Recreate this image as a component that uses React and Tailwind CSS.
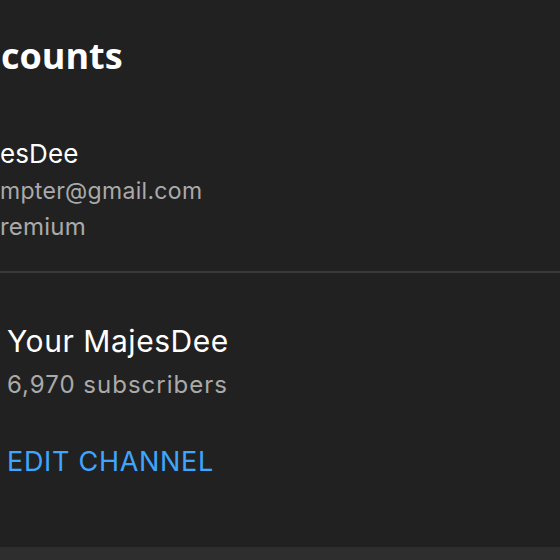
export default function App() {
  const inter = { fontFamily: 'Inter, "Noto Sans", sans-serif' };
  return (
    <div className="w-[560px] h-[560px] bg-[#212121] flex flex-col overflow-hidden" style={inter}>
      <div className="mt-[38px] h-[36px] leading-none text-[36px] font-bold text-white pl-[1px]" style={{ fontFamily: '"Open Sans", sans-serif' }}>
        counts
      </div>
      <div className="mt-[67px] h-[26px] leading-none text-[26px] text-white tracking-[0.1px]">esDee</div>
      <div className="mt-[13px] h-[24px] leading-none text-[23px] text-[#aaaaaa] tracking-[0.3px]">mpter@gmail.com</div>
      <div className="mt-[11px] h-[24px] leading-none text-[24px] text-[#aaaaaa] tracking-[0.2px]">remium</div>
      <div className="mt-[32px] h-[2px] bg-[#3a3a3a]" />
      <div className="pl-[7px] flex flex-col">
        <div className="mt-[53px] h-[30px] leading-none text-[30px] text-white tracking-[0.55px]">Your MajesDee</div>
        <div className="mt-[17px] h-[24px] leading-none text-[24px] text-[#aaaaaa] tracking-[1px]">6,970 subscribers</div>
        <div className="mt-[51px] h-[27px] leading-none text-[27px] text-[#3ea6ff] tracking-[0.7px]">EDIT CHANNEL</div>
      </div>
      <div className="flex-1" />
      <div className="h-[13px] bg-[#2e2e2e]" />
    </div>
  );
}
